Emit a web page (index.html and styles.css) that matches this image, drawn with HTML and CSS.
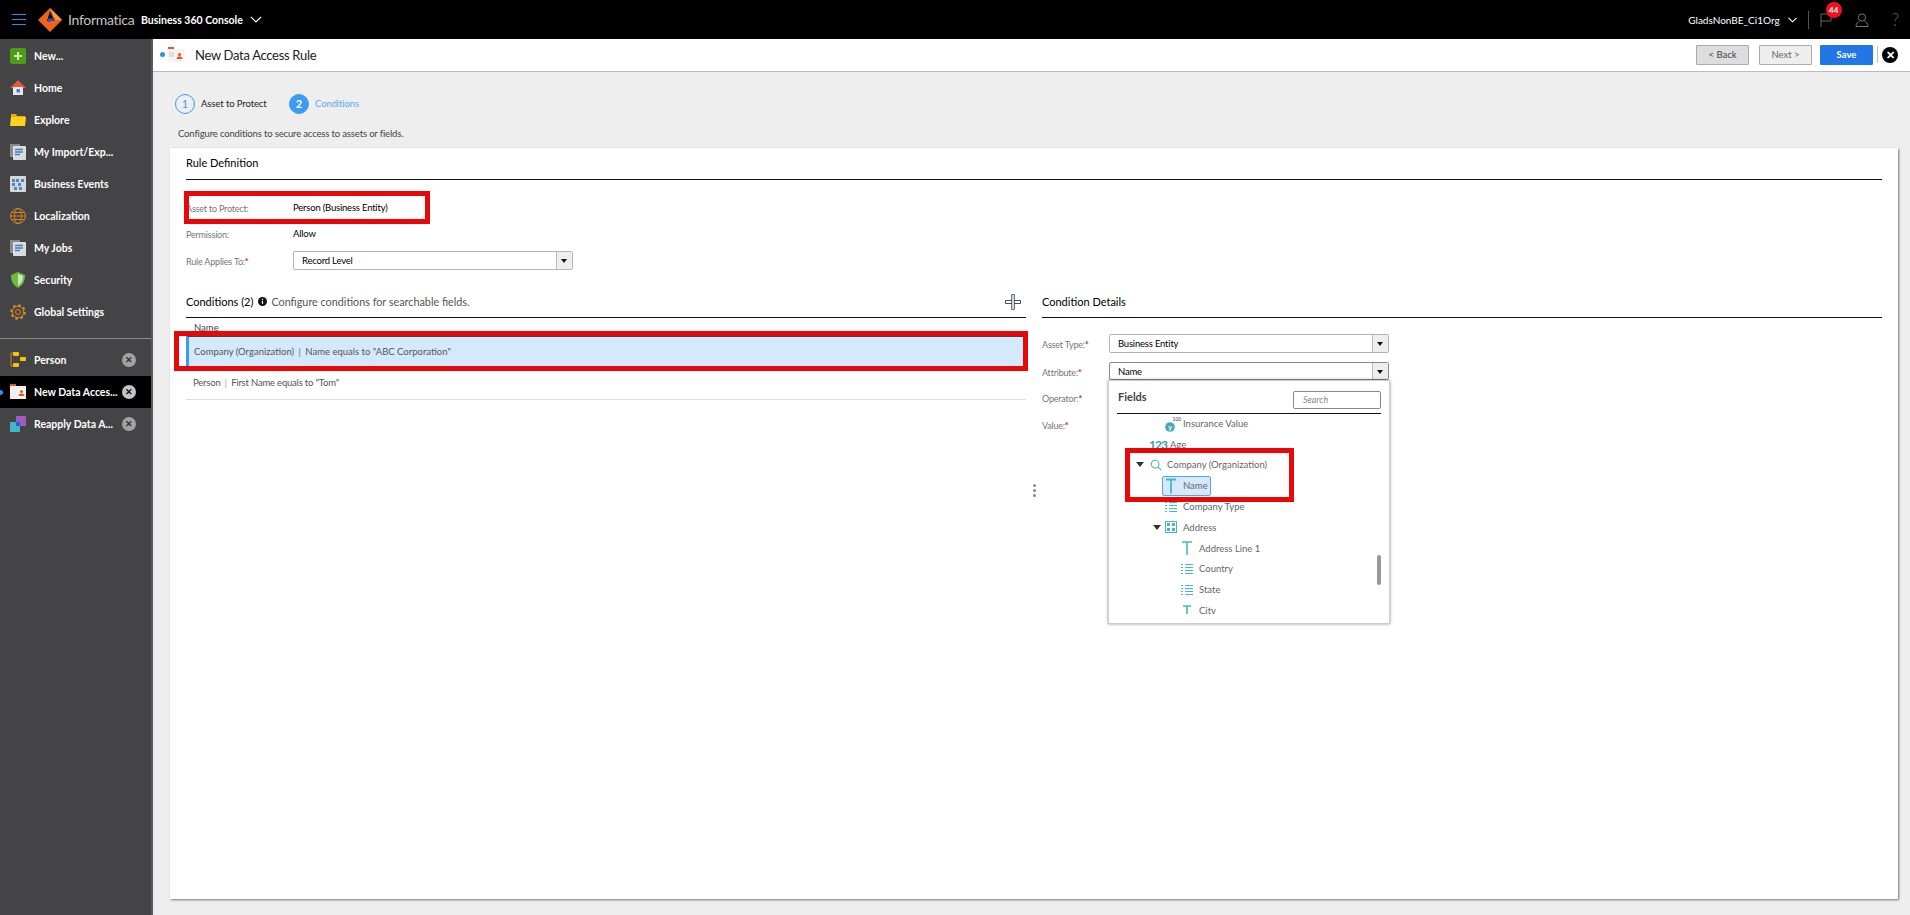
FILE: index.html
```html
<!DOCTYPE html>
<html lang="en">
<head>
<meta charset="utf-8">
<title>New Data Access Rule</title>
<link rel="stylesheet" href="styles.css">
</head>
<body>
<div class="app">
  <header class="topbar">
    <svg class="burger" viewBox="0 0 14 11" width="14" height="11"><path d="M0 .5h14M0 5.5h14M0 10.5h14" stroke="#2f8fe8" stroke-width="1"/></svg>
    <svg class="logo" viewBox="0 0 24 24" width="24" height="24"><path d="M12 0 24 12 12 24 0 12Z" fill="#f0641a"/><path d="M12 0 24 12h-7Z" fill="#f99a3a"/><path d="M12 3 16.500 12.500 9 13Z" fill="#111"/><path d="M10 10.500h8l-8 4Z" fill="#2750d8"/></svg>
    <span class="brand">Informatica</span>
    <span class="product">Business 360 Console</span>
    <svg class="chev" viewBox="0 0 12 7" width="12" height="7"><path d="M1 1l5 5 5-5" fill="none" stroke="#fff" stroke-width="1.2"/></svg>
    <span class="spacer"></span>
    <span class="org">GladsNonBE_Ci1Org</span>
    <svg class="org-chev" viewBox="0 0 9 6" width="9" height="6"><path d="M.5.8 4.500 4.800 8.500.8" fill="none" stroke="#fff" stroke-width="1.100"/></svg>
    <span class="topsep"></span>
    <span class="flag-wrap">
      <svg viewBox="0 0 12 14" width="12" height="14"><path d="M1 14V1h10v7H1" fill="none" stroke="#666" stroke-width="1"/></svg>
      <span class="badge">44</span>
    </span>
    <svg class="user" viewBox="0 0 14 14" width="14" height="14"><circle cx="7" cy="4.500" r="3.600" fill="none" stroke="#777"/><path d="M1 13.500c0-3.400 2-4.600 3.500-5.200M13 13.500c0-3.400-2-4.600-3.500-5.200M1 13.500h12" fill="none" stroke="#777"/></svg>
    <span class="help">?</span>
  </header>

  <div class="body">
    <nav class="sidebar">
      <ul class="navlist">
        <li class="navitem"><svg class="navicon" viewBox="0 0 16 16"><rect width="16" height="16" rx="2" fill="#4f9d16"/><path d="M8 4v8M4 8h8" stroke="#cfe8b8" stroke-width="2"/></svg><span>New...</span></li>
        <li class="navitem"><svg class="navicon" viewBox="0 0 16 16"><path d="M8 0 0 8h16Z" fill="#e05a3a"/><path d="M3 7h10v8H3Z" fill="#e8e8e8"/><path d="M6.500 9h3.500v3.500H6.500Z" fill="#3f83d8"/></svg><span>Home</span></li>
        <li class="navitem"><svg class="navicon" viewBox="0 0 16 16"><path d="M1 2h5l1 2h8v3H1Z" fill="#e2b008"/><path d="M1 5h15l-1 9H0Z" fill="#ffd21f"/></svg><span>Explore</span></li>
        <li class="navitem"><svg class="navicon" viewBox="0 0 16 16"><rect x="0" y="0" width="10" height="13" fill="#8c8c8c"/><rect x="3" y="2" width="13" height="14" rx="1" fill="#dcdcdc"/><path d="M5 5.500h8M5 8h8M5 10.500h5" stroke="#3d7fc9" stroke-width="1.500"/></svg><span>My Import/Exp...</span></li>
        <li class="navitem"><svg class="navicon" viewBox="0 0 16 16"><rect width="16" height="16" rx="1" fill="#d8d8d8"/><path d="M2 3h3v3H2ZM6 3h3v3H6ZM11 3h3v3h-3ZM2 7h3v3H2ZM8 7h3v3H8ZM4 11h3v3H4ZM9 11h3v3H9Z" fill="#4d86cc"/></svg><span>Business Events</span></li>
        <li class="navitem"><svg class="navicon" viewBox="0 0 16 16"><g fill="none" stroke="#d98a1f" stroke-width=".9"><circle cx="8" cy="8" r="7.500"/><ellipse cx="8" cy="8" rx="3.500" ry="7.500"/><path d="M.5 8h15M1.500 4.500h13M1.500 11.500h13"/></g></svg><span>Localization</span></li>
        <li class="navitem"><svg class="navicon" viewBox="0 0 16 16"><rect x="0" y="0" width="10" height="13" fill="#8c8c8c"/><rect x="3" y="2" width="13" height="14" rx="1" fill="#dcdcdc"/><path d="M5 5.500h8M5 8h8M5 10.500h5" stroke="#3d7fc9" stroke-width="1.500"/></svg><span>My Jobs</span></li>
        <li class="navitem"><svg class="navicon" viewBox="0 0 16 16"><path d="M8 0 15 3c0 6-2 10-7 13C3 13 1 9 1 3Z" fill="#6dbb3c"/><path d="M8 2 13 4c0 5-2 7.500-5 10Z" fill="#cfe6bd"/></svg><span>Security</span></li>
        <li class="navitem"><svg class="navicon" viewBox="0 0 16 16"><g fill="none" stroke="#d98a1f"><circle cx="8" cy="8" r="2.500"/><circle cx="8" cy="8" r="5.700"/><circle cx="8" cy="8" r="6.800" stroke-width="2" stroke-dasharray="2.600 2.740"/></g></svg><span>Global Settings</span></li>
      </ul>
      <div class="navrule"></div>
      <ul class="navlist">
        <li class="navitem tab"><svg class="navicon" viewBox="0 0 16 16"><path d="M4 1H1v13h3" fill="none" stroke="#e07a20"/><rect x="3" y="0" width="6" height="4" rx="1" fill="#f7c400"/><rect x="10" y="5" width="6" height="4" rx="1" fill="#f7c400"/><rect x="3" y="11" width="6" height="4" rx="1" fill="#f7c400"/></svg><span class="tablabel">Person</span><span class="tabclose">✕</span></li>
        <li class="navitem tab active"><i class="activedot"></i><svg class="navicon" viewBox="0 0 16 16"><rect y="2" width="16" height="13" fill="#f0f0f0"/><rect y="0" width="6" height="2" fill="#e8561c"/><rect x="8" y="5" width="7" height="8" fill="#fff"/><circle cx="11.500" cy="7.500" r="1.600" fill="#e8561c"/><path d="M8.500 12c0-2 1.500-2.500 3-2.500s3 .5 3 2.500Z" fill="#e8561c"/></svg><span class="tablabel">New Data Acces...</span><span class="tabclose">✕</span></li>
        <li class="navitem tab"><svg class="navicon" viewBox="0 0 16 16"><rect x="6" y="0" width="10" height="10" fill="#a05ac0"/><rect x="0" y="6" width="10" height="10" fill="#3db8c8"/><rect x="6" y="6" width="4" height="4" fill="#2a5ed0"/></svg><span class="tablabel">Reapply Data A...</span><span class="tabclose">✕</span></li>
      </ul>
    </nav>

    <main class="main">
      <div class="subheader">
        <i class="subdot"></i>
        <svg class="subicon" viewBox="0 0 16 16" width="16" height="16"><rect y="2" width="16" height="13" fill="#f4f4f4"/><rect y="0" width="6" height="2" fill="#e8561c"/><rect x="1" y="5" width="5" height="5" fill="#ddd"/><circle cx="11.500" cy="7.500" r="1.600" fill="#e8561c"/><path d="M8.500 12c0-2 1.500-2.500 3-2.500s3 .5 3 2.500Z" fill="#e8561c"/></svg>
        <h1 class="title">New Data Access Rule</h1>
        <span class="spacer"></span>
        <button class="btn back">&lt; Back</button>
        <button class="btn next">Next &gt;</button>
        <button class="btn save">Save</button>
        <span class="subsep"></span>
        <span class="closeall">✕</span>
      </div>

      <div class="content">
        <div class="steps">
          <span class="stepnum">1</span><span class="steplabel">Asset to Protect</span>
          <span class="stepnum current">2</span><span class="steplabel current">Conditions</span>
        </div>
        <p class="desc">Configure conditions to secure access to assets or fields.</p>

        <section class="card">
          <h2 class="section-title rule-title">Rule Definition</h2>
          <div class="defs">
            <div class="defrow"><span class="label">Asset to Protect:</span><span class="value">Person (Business Entity)</span></div>
            <div class="defrow"><span class="label">Permission:</span><span class="value">Allow</span></div>
            <div class="defrow"><span class="label">Rule Applies To:<b>*</b></span>
              <span class="select rule-select"><span class="selval">Record Level</span><span class="selbtn"></span></span></div>
          </div>

          <div class="split">
            <div class="left">
              <div class="section-title cond-title">
                <span>Conditions (2)</span>
                <svg class="info" viewBox="0 0 10 10" width="9" height="9"><circle cx="5" cy="5" r="5" fill="#111"/><path d="M5 4.200v3.500M5 2v1.200" stroke="#fff" stroke-width="1.300"/></svg>
                <span class="hint">Configure conditions for searchable fields.</span>
                <span class="spacer"></span>
                <svg class="plus" viewBox="0 0 16 16" width="16" height="16"><path d="M.5 6.500h15v3H.5Z" fill="#fff" stroke="#222" stroke-width=".8"/><path d="M6.500.5h3v15h-3Z" fill="#bcdcf2" stroke="#222" stroke-width=".6"/></svg>
              </div>
              <div class="col-head">Name</div>
              <div class="row selected">Company (Organization) <span class="pipe">|</span> Name equals to "ABC Corporation"</div>
              <div class="row tight">Person <span class="pipe orange">|</span> First Name equals to "Tom"</div>
            </div>

            <div class="kebab"><i></i><i></i><i></i></div>

            <div class="right">
              <div class="section-title cond-title">Condition Details</div>
              <div class="formrow"><span class="label">Asset Type:<b>*</b></span><span class="select wide"><span class="selval">Business Entity</span><span class="selbtn"></span></span></div>
              <div class="formrow attr"><span class="label">Attribute:<b>*</b></span><span class="select wide open"><span class="selval">Name</span><span class="selbtn"></span></span></div>
              <div class="formrow op"><span class="label">Operator:<b>*</b></span></div>
              <div class="formrow val"><span class="label">Value:<b>*</b></span></div>
            </div>
          </div>
        </section>
      </div>
    </main>
  </div>

  <div class="popup">
    <div class="pophead"><span class="poptitle">Fields</span><span class="popsearch">Search</span></div>
    <div class="tree">
      <div class="node ind-2"><svg class="ticon insure" viewBox="0 0 18 18" width="18" height="18"><circle cx="5" cy="13" r="4.800" fill="#45a8b8"/><text x="3.200" y="15.500" font-size="7" font-weight="700" fill="#fff" font-family="Lato">y</text><text x="7.500" y="6.500" font-size="5" fill="#333" font-family="Lato">100</text></svg><span>Insurance Value</span></div>
      <div class="node age"><span class="num">123</span><span>Age</span></div>
      <div class="node ind-1"><i class="caret"></i><svg class="ticon" viewBox="0 0 14 14" width="12" height="12"><circle cx="6" cy="6" r="4.500" fill="none" stroke="#45b8c8" stroke-width="1.300"/><path d="M9.300 9.300 13 13" stroke="#45b8c8" stroke-width="1.300"/></svg><span>Company (Organization)</span></div>
      <div class="node ind-2 picked"><svg class="ticon" viewBox="0 0 12 16" width="12" height="16"><path d="M1 1.500h10M6 1.500v14" stroke="#45b8c8" stroke-width="1.800" fill="none"/></svg><span>Name</span></div>
      <div class="node ind-2"><svg class="ticon" viewBox="0 0 12 12" width="12" height="12"><path d="M0 1.500h2M4 1.500h8M0 4.500h2M4 4.500h8M0 7.500h2M4 7.500h8M0 10.500h2M4 10.500h8" stroke="#45b8c8" stroke-width="1.200"/></svg><span>Company Type</span></div>
      <div class="node ind-1b"><i class="caret"></i><svg class="ticon" viewBox="0 0 12 12" width="12" height="12"><rect x=".5" y=".5" width="11" height="11" fill="none" stroke="#45b8c8"/><path d="M2 2h3v3H2ZM7 2h3v3H7ZM2 7h3v3H2ZM7 7h3v3H7Z" fill="#45b8c8"/></svg><span>Address</span></div>
      <div class="node ind-3"><svg class="ticon" viewBox="0 0 12 14" width="12" height="14"><path d="M1 1h10M6 1v13" stroke="#45b8c8" stroke-width="1.600" fill="none"/></svg><span>Address Line 1</span></div>
      <div class="node ind-3"><svg class="ticon" viewBox="0 0 12 12" width="12" height="12"><path d="M0 1.500h2M4 1.500h8M0 4.500h2M4 4.500h8M0 7.500h2M4 7.500h8M0 10.500h2M4 10.500h8" stroke="#45b8c8" stroke-width="1.200"/></svg><span>Country</span></div>
      <div class="node ind-3"><svg class="ticon" viewBox="0 0 12 12" width="12" height="12"><path d="M0 1.500h2M4 1.500h8M0 4.500h2M4 4.500h8M0 7.500h2M4 7.500h8M0 10.500h2M4 10.500h8" stroke="#45b8c8" stroke-width="1.200"/></svg><span>State</span></div>
      <div class="node ind-3"><svg class="ticon" viewBox="0 0 12 12" width="12" height="12"><path d="M2 1h8M6 1v11" stroke="#45b8c8" stroke-width="1.600" fill="none"/></svg><span>City</span></div>
    </div>
    <i class="scrollthumb"></i>
  </div>

  <i class="mark mark-asset"></i>
  <i class="mark mark-row"></i>
  <i class="mark mark-tree"></i>
</div>
</body>
</html>
```
FILE: styles.css
```css
* { box-sizing: border-box; }
html, body { margin: 0; height: 100%; overflow: hidden; }
body { font-family: Lato, "Noto Sans", sans-serif; font-size: 10px; color: #444; }
ul { list-style: none; margin: 0; padding: 0; }
i { display: block; font-style: normal; }
.spacer { flex: 1; }

.app { position: relative; width: 1910px; height: 915px; display: flex; flex-direction: column; }

/* Top bar */
.topbar { height: 39px; flex: none; background: #000; display: flex; align-items: center; color: #fff; }
.burger { margin-left: 12px; }
.logo { margin-left: 12px; }
.brand { margin-left: 6px; font-size: 14px; letter-spacing: -.3px; color: #c4c4c4; width: 67px; white-space: nowrap; }
.product { margin-left: 6px; font-size: 10.500px; font-weight: 700; width: 104px; white-space: nowrap; }
.chev { margin-left: 5px; }
.org { font-size: 10px; }
.org-chev { margin-left: 8px; }
.topsep { width: 1px; height: 18px; background: #555; margin-left: 11px; }
.flag-wrap { position: relative; margin-left: 11px; display: flex; }
.badge { position: absolute; left: 6px; top: -11px; width: 16px; height: 16px; border-radius: 50%; background: #f4111c; color: #fff; font-size: 8px; font-weight: 700; text-align: center; line-height: 16px; }
.user { margin-left: 23px; }
.help { margin-left: 23px; margin-right: 11px; color: #666; font-size: 17px; font-weight: 300; }

.body { flex: 1; display: flex; min-height: 0; }

/* Sidebar */
.sidebar { width: 153px; flex: none; background: #444446; border-right: 2px solid #5a5a5a; padding-top: 1px; }
.navitem { height: 32px; display: flex; align-items: center; padding-left: 10px; color: #fff; font-size: 10.500px; font-weight: 700; position: relative; white-space: nowrap; }
.navicon { width: 16px; height: 16px; flex: none; margin-right: 8px; }
.navrule { height: 1px; background: #8a8a8a; margin: 10px 0 5px; }
.tablabel { flex: 1; min-width: 0; overflow: hidden; }
.tabclose { width: 14px; height: 14px; border-radius: 50%; background: #a2a2a2; color: #333; font-size: 9px; text-align: center; line-height: 14px; margin-right: 15px; flex: none; }
.tab.active { background: #000; }
.tab.active .tabclose { background: #c4c4c4; color: #111; }
.activedot { position: absolute; left: -2px; top: 14px; width: 5px; height: 5px; border-radius: 50%; background: #2f8fee; }

/* Main */
.main { flex: 1; min-width: 0; display: flex; flex-direction: column; background: #eee; }
.subheader { height: 33px; flex: none; background: #fff; border-bottom: 1px solid #bbb; display: flex; align-items: center; padding: 0 12px 1px 7px; }
.subdot { width: 5px; height: 5px; border-radius: 50%; background: #2f8fee; }
.subicon { margin-left: 3px; }
.title { margin: 0 0 0 11px; font-size: 13px; font-weight: 400; color: #222; letter-spacing: -.3px; }
.btn { width: 53px; height: 20px; border: 1px solid #aaa; border-radius: 1px; font: 400 9.500px Lato, sans-serif; padding: 0; color: #444; }
.back { background: #ddd; }
.next { background: #eee; margin-left: 10px; color: #666; }
.save { background: #2276e6; border-color: #2276e6; color: #fff; margin-left: 8px; font-weight: 700; }
.subsep { width: 1px; height: 17px; background: #bbb; margin-left: 4px; }
.closeall { width: 16px; height: 16px; border-radius: 50%; background: #000; color: #fff; font-size: 11px; font-weight: 700; text-align: center; line-height: 16px; margin-left: 4px; }

.content { flex: 1; min-height: 0; display: flex; flex-direction: column; padding: 21px 12px 16px 17px; }
.steps { height: 21px; flex: none; display: flex; align-items: center; padding-left: 5px; }
.stepnum { width: 20px; height: 20px; border-radius: 50%; border: 1px solid #3d9bf3; color: #3d9bf3; text-align: center; line-height: 18px; font-size: 11px; }
.stepnum.current { background: #3d9bf3; color: #fff; font-weight: 700; margin-left: 24px; }
.steplabel { margin-left: 6px; color: #222; font-size: 9.500px; letter-spacing: -.1px; width: 64px; white-space: nowrap; }
.steplabel.current { color: #5baaf5; }
.desc { margin: 13px 0 0 8px; height: 13px; line-height: 13px; font-size: 9.500px; letter-spacing: -.15px; color: #444; flex: none; }

.card { flex: 1; min-height: 0; margin-top: 8px; background: #fff; box-shadow: 1px 1px 2px rgba(0,0,0,.5); padding: 0 16px; display: flex; flex-direction: column; }
.section-title { margin: 0; font-size: 11px; font-weight: 400; color: #000; border-bottom: 1px solid #111; }
.rule-title { height: 32px; line-height: 30px; flex: none; }
.defs { padding-top: 14px; flex: none; }
.defrow { height: 26.500px; display: flex; align-items: center; }
.label { width: 107px; flex: none; color: #777; font-size: 9px; letter-spacing: -.2px; padding-top: 2px; }
.label b { color: #e5121c; font-weight: 700; }
.value { color: #000; font-size: 9.500px; letter-spacing: -.2px; }
.select { display: flex; height: 19px; border: 1px solid #b4b4b4; border-radius: 2px; background: #fff; }
.rule-select { width: 280px; }
.selval { flex: 1; padding-left: 8px; line-height: 17px; color: #000; font-size: 9.500px; letter-spacing: -.2px; }
.selbtn { width: 16px; flex: none; background: #eee; border-left: 1px solid #bbb; position: relative; }
.selbtn::after { content: ""; position: absolute; left: 4px; top: 7px; border: 3.500px solid transparent; border-top: 4px solid #111; border-bottom: 0; }

.split { display: flex; flex: 1; min-height: 0; margin-top: 11.500px; position: relative; }
.left { width: 840px; flex: none; }
.right { flex: 1; margin-left: 16px; }
.cond-title { height: 33px; display: flex; align-items: center; padding-top: 1px; }
.info { margin-left: 5px; }
.hint { margin-left: 4px; color: #555; font-size: 10.800px; }
.plus { margin-right: 5px; }
.col-head { height: 18px; padding: 4px 0 0 8px; font-size: 9.500px; color: #444; line-height: 12px; }
.row { height: 34px; display: flex; align-items: center; white-space: pre; padding-left: 7px; font-size: 9.500px; color: #555; border-bottom: 1px solid #ddd; }
.row.tight { letter-spacing: -.2px; }
.row.selected { height: 30px; background: #d4e9fb; border: 0; border-top: 1px solid #444; border-left: 3px solid #3d9bf3; padding-left: 5px; }
.pipe { margin: 0 2px; color: #667; }
.pipe.orange { color: #e0904a; }
.kebab { position: absolute; left: 847px; top: 199px; display: flex; flex-direction: column; gap: 2px; }
.kebab i { width: 3px; height: 3px; border-radius: 50%; background: #888; }
.formrow { display: flex; align-items: center; height: 19px; }
.formrow:nth-child(2) { margin-top: 16px; }
.formrow.attr { margin-top: 9px; height: 18px; }
.formrow.op { margin-top: 8px; }
.formrow.val { margin-top: 8px; }
.formrow .label { width: 67px; }
.select.wide { width: 280px; }
.select.open { border-color: #888; height: 18px; }

/* Fields popup */
.popup { position: absolute; left: 1108px; top: 380px; width: 282px; height: 244px; background: #fff; border: 1px solid #ccc; box-shadow: 0 0 3px rgba(0,0,0,.4); padding: 0 8px; }
.pophead { height: 33px; display: flex; align-items: center; justify-content: space-between; border-bottom: 1px solid #111; }
.poptitle { font-size: 11px; font-weight: 700; color: #444; padding-left: 1px; margin-bottom: 2px; }
.popsearch { width: 88px; height: 18px; margin-top: 6px; border: 1px solid #888; border-radius: 2px; font-style: italic; color: #888; font-size: 9px; line-height: 16px; padding-left: 9px; }
.tree { height: 201px; overflow: hidden; margin-top: -1px; }
.node { height: 20.800px; display: flex; align-items: center; color: #666; font-size: 9.500px; position: relative; white-space: nowrap; }
.node .ticon { flex: none; margin-right: 6px; }
.node .insure { margin-right: 0; }
.ind-1 { padding-left: 19px; }
.ind-1 .ticon { margin-left: 6px; margin-right: 5px; }
.ind-1b { padding-left: 36px; }
.ind-1b .ticon { margin-left: 4px; }
.ind-2 { padding-left: 48px; }
.ind-3 { padding-left: 64px; }
.age { padding-left: 32px; }
.num { color: #2f9db0; font-weight: 700; font-size: 12px; letter-spacing: -1px; margin-right: 3px; }
.caret { border: 4px solid transparent; border-top: 5px solid #333; border-bottom: 0; flex: none; }
.picked { width: max-content; margin: .4px 0 .4px 45px; padding: 0 2px; height: 20px; background: #d4e9fb; border: 1px solid #52a6f5; border-radius: 2px; }
.scrollthumb { position: absolute; left: 268px; top: 174px; width: 4px; height: 30px; background: #999; border-radius: 2px; }

/* Red annotation rectangles drawn on the screenshot */
.mark { position: absolute; border: 5px solid #e80808; }
.mark-asset { left: 184px; top: 191px; width: 246px; height: 33px; }
.mark-row { left: 174px; top: 331px; width: 854px; height: 40px; }
.mark-tree { left: 1125px; top: 448px; width: 169px; height: 54px; }
```
